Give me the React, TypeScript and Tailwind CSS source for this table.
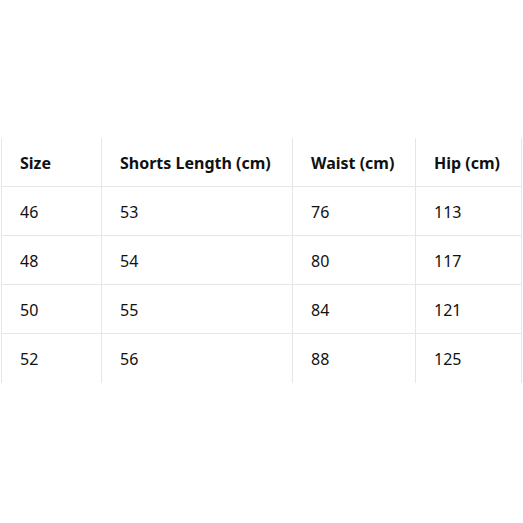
import React from "react";

const headers = ["Size", "Shorts Length (cm)", "Waist (cm)", "Hip (cm)"];
const rows = [
  ["46", "53", "76", "113"],
  ["48", "54", "80", "117"],
  ["50", "55", "84", "121"],
  ["52", "56", "88", "125"],
];

export default function App() {
  return (
    <div
      className="w-[523px] h-[523px] bg-white pt-[138px] pl-[1px]"
      style={{ fontFamily: '"Noto Sans", "Open Sans", sans-serif' }}
    >
      <div className="w-[521px] border-l border-r border-[#e6e6e6]">
        {[headers, ...rows].map((r, i) => (
          <div
            key={i}
            className={`grid grid-cols-[99px_191px_123px_106px] h-[49px] ${
              i < rows.length ? "border-b border-[#e6e6e6]" : ""
            }`}
          >
            {r.map((c, j) => (
              <div
                key={j}
                className={`flex items-center pl-[18px] pt-[1px] text-[16px] text-[#111] ${
                  j > 0 ? "border-l border-[#e6e6e6]" : ""
                } ${i === 0 ? "font-bold" : "font-normal"}`}
              >
                {c}
              </div>
            ))}
          </div>
        ))}
      </div>
    </div>
  );
}
